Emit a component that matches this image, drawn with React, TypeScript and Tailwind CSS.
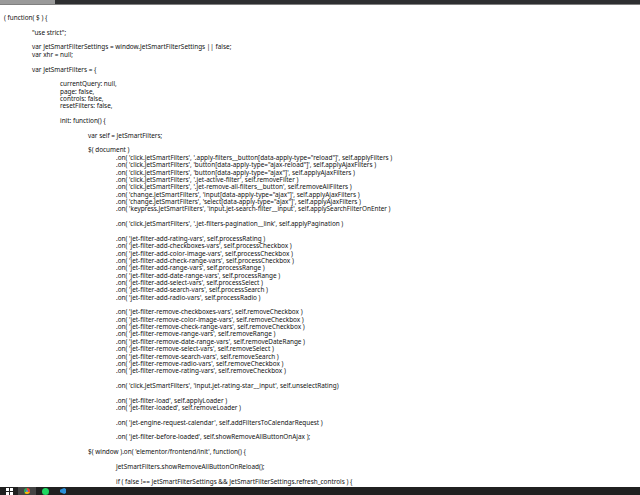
const L: [number, string][] = [
[0,'( function( $ ) {'],[0,''],[1,'"use strict";'],[0,''],
[1,'var JetSmartFilterSettings = window.JetSmartFilterSettings || false;'],[1,'var xhr = null;'],[0,''],
[1,'var JetSmartFilters = {'],[0,''],
[2,'currentQuery: null,'],[2,'page: false,'],[2,'controls: false,'],[2,'resetFilters: false,'],[0,''],
[2,'init: function() {'],[0,''],[3,'var self = JetSmartFilters;'],[0,''],[3,'$( document )'],
[4,`.on( 'click.JetSmartFilters', '.apply-filters__button[data-apply-type="reload"]', self.applyFilters )`],
[4,`.on( 'click.JetSmartFilters', 'button[data-apply-type="ajax-reload"]', self.applyAjaxFilters )`],
[4,`.on( 'click.JetSmartFilters', 'button[data-apply-type="ajax"]', self.applyAjaxFilters )`],
[4,`.on( 'click.JetSmartFilters', '.jet-active-filter', self.removeFilter )`],
[4,`.on( 'click.JetSmartFilters', '.jet-remove-all-filters__button', self.removeAllFilters )`],
[4,`.on( 'change.JetSmartFilters', 'input[data-apply-type="ajax"]', self.applyAjaxFilters )`],
[4,`.on( 'change.JetSmartFilters', 'select[data-apply-type="ajax"]', self.applyAjaxFilters )`],
[4,`.on( 'keypress.JetSmartFilters', 'input.jet-search-filter__input', self.applySearchFilterOnEnter )`],
[0,''],[4,`.on( 'click.JetSmartFilters', '.jet-filters-pagination__link', self.applyPagination )`],[0,''],
[4,`.on( 'jet-filter-add-rating-vars', self.processRating )`],
[4,`.on( 'jet-filter-add-checkboxes-vars', self.processCheckbox )`],
[4,`.on( 'jet-filter-add-color-image-vars', self.processCheckbox )`],
[4,`.on( 'jet-filter-add-check-range-vars', self.processCheckbox )`],
[4,`.on( 'jet-filter-add-range-vars', self.processRange )`],
[4,`.on( 'jet-filter-add-date-range-vars', self.processRange )`],
[4,`.on( 'jet-filter-add-select-vars', self.processSelect )`],
[4,`.on( 'jet-filter-add-search-vars', self.processSearch )`],
[4,`.on( 'jet-filter-add-radio-vars', self.processRadio )`],[0,''],
[4,`.on( 'jet-filter-remove-checkboxes-vars', self.removeCheckbox )`],
[4,`.on( 'jet-filter-remove-color-image-vars', self.removeCheckbox )`],
[4,`.on( 'jet-filter-remove-check-range-vars', self.removeCheckbox )`],
[4,`.on( 'jet-filter-remove-range-vars', self.removeRange )`],
[4,`.on( 'jet-filter-remove-date-range-vars', self.removeDateRange )`],
[4,`.on( 'jet-filter-remove-select-vars', self.removeSelect )`],
[4,`.on( 'jet-filter-remove-search-vars', self.removeSearch )`],
[4,`.on( 'jet-filter-remove-radio-vars', self.removeCheckbox )`],
[4,`.on( 'jet-filter-remove-rating-vars', self.removeCheckbox )`],[0,''],
[4,`.on( 'click.JetSmartFilters', 'input.jet-rating-star__input', self.unselectRating)`],[0,''],
[4,`.on( 'jet-filter-load', self.applyLoader )`],[4,`.on( 'jet-filter-loaded', self.removeLoader )`],[0,''],
[4,`.on( 'jet-engine-request-calendar', self.addFiltersToCalendarRequest )`],[0,''],
[4,`.on( 'jet-filter-before-loaded', self.showRemoveAllButtonOnAjax );`],[0,''],
[3,`$( window ).on( 'elementor/frontend/init', function() {`],[0,''],
[4,'JetSmartFilters.showRemoveAllButtonOnReload();'],[0,''],
[4,'if ( false !== JetSmartFilterSettings && JetSmartFilterSettings.refresh_controls ) {'],
];
const pad = ['pl-[4px]','pl-[32px]','pl-[60px]','pl-[88px]','pl-[116px]'];
export default function App() {
  return (
    <div className="w-[640px] h-[495px] bg-white flex flex-col overflow-hidden">
      <div className="h-[4px] flex shrink-0">
        <div className="w-[55px] bg-[#9a9a9a]" />
        <div className="flex-1 bg-[#2e2f31]" />
      </div>
      <div className="h-[1px] bg-[#808080] shrink-0" />
      <div className="flex-1 overflow-hidden pt-[9px] font-['Liberation_Mono'] text-[6.4px] leading-[7.37px] text-[#111] whitespace-pre">
        {L.map(([i, t], k) => (
          <div key={k} className={`h-[7.37px] ${pad[i]}`}>{t}</div>
        ))}
      </div>
      <div className="h-[8px] bg-[#202020] flex items-center shrink-0">
        <div className="w-[18px] flex justify-center">
          <div className="grid grid-cols-2 gap-[1px]">
            <div className="w-[3px] h-[3px] bg-white" /><div className="w-[3px] h-[3px] bg-white" />
            <div className="w-[3px] h-[3px] bg-white" /><div className="w-[3px] h-[3px] bg-white" />
          </div>
        </div>
        <div className="w-[18px] h-full bg-[#444] flex items-center justify-center">
          <div className="w-[6px] h-[6px] rounded-full bg-[conic-gradient(#ea4335_0_33%,#fbbc05_0_66%,#34a853_0)] flex items-center justify-center"><div className="w-[2px] h-[2px] rounded-full bg-[#4285f4]" /></div>
        </div>
        <div className="w-[18px] flex justify-center"><div className="w-[7px] h-[7px] rounded-full bg-[#1ed760]" /></div>
        <div className="w-[18px] flex justify-center"><div className="w-[6px] h-[6px] bg-[#2b8fd8] [clip-path:polygon(0_30%,70%_0,100%_15%,100%_85%,70%_100%,0_70%)]" /></div>
      </div>
    </div>
  );
}
